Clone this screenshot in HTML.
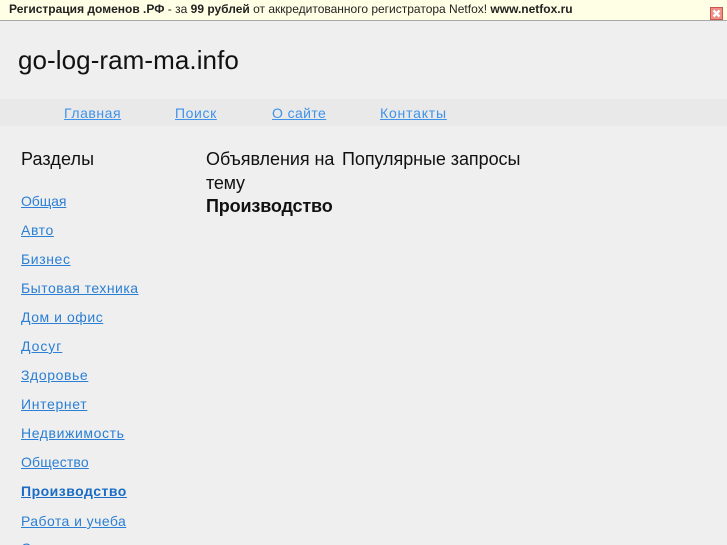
<!DOCTYPE html>
<html lang="ru"><head><meta charset="utf-8"><title>go-log-ram-ma.info</title>
<style>
html,body{margin:0;padding:0;background:#efefef}
#w{position:relative;width:727px;height:545px;overflow:hidden;background:#efefef;font-family:"Liberation Sans",sans-serif;color:#111}
.t{position:absolute;white-space:nowrap}
a{color:#2b7fd4;text-decoration:underline}
#bar{position:absolute;left:0;top:0;width:727px;height:20px;background:#ffffe6;border-bottom:1px solid #a8a8a8}
#nav{position:absolute;left:0;top:99px;width:727px;height:27px;background:#e9e9e9}
.s{left:21px;font-size:14px;line-height:16px}
.n{top:105px;font-size:14px;line-height:16px;color:#3f92ea}
.h{font-size:18px;line-height:24px;letter-spacing:-.06px}
</style></head><body><div id="w">
<div id="bar"></div>
<div class="t" style="left:9px;top:2px;font-size:12px;line-height:15px;color:#222"><b>Регистрация доменов .РФ</b> - за <b>99 рублей</b> от аккредитованного регистратора Netfox! <b>www.netfox.ru</b></div>
<svg style="position:absolute;left:710px;top:7px" width="13" height="13" viewBox="0 0 13 13"><rect x=".5" y=".5" width="12" height="12" fill="#ef8f86" stroke="#c9564f"/><path d="M3.5 3.5l6 6M9.5 3.5l-6 6" stroke="#fff" stroke-width="2.4"/></svg>
<div class="t" style="left:18px;top:44px;font-size:26px;line-height:32px;letter-spacing:.07px;color:#111">go-log-ram-ma.info</div>
<div id="nav"></div>
<a class="t n" style="left:64px;letter-spacing:.55px" href="#">Главная</a>
<a class="t n" style="left:175px;letter-spacing:.6px" href="#">Поиск</a>
<a class="t n" style="left:272px;letter-spacing:.4px" href="#">О сайте</a>
<a class="t n" style="left:380px;letter-spacing:.8px" href="#">Контакты</a>
<div class="t h" style="left:21px;top:147px;letter-spacing:.1px">Разделы</div>
<div class="t h" style="left:206px;top:147px">Объявления на</div>
<div class="t h" style="left:206px;top:171px;letter-spacing:-.2px">тему</div>
<div class="t h" style="left:206px;top:194px;letter-spacing:-.15px"><b>Производство</b></div>
<div class="t h" style="left:342px;top:147px">Популярные запросы</div>
<a class="t s" style="top:193px;letter-spacing:-.1px" href="#">Общая</a>
<a class="t s" style="top:222px;letter-spacing:.6px" href="#">Авто</a>
<a class="t s" style="top:251px;letter-spacing:.6px" href="#">Бизнес</a>
<a class="t s" style="top:280px;letter-spacing:.48px" href="#">Бытовая техника</a>
<a class="t s" style="top:309px;letter-spacing:.55px" href="#">Дом и офис</a>
<a class="t s" style="top:338px;letter-spacing:.95px" href="#">Досуг</a>
<a class="t s" style="top:367px;letter-spacing:.6px" href="#">Здоровье</a>
<a class="t s" style="top:396px;letter-spacing:.66px" href="#">Интернет</a>
<a class="t s" style="top:425px;letter-spacing:.6px" href="#">Недвижимость</a>
<a class="t s" style="top:454px;letter-spacing:.16px" href="#">Общество</a>
<a class="t s" style="top:483px;color:#1a6cc4;letter-spacing:.5px" href="#"><b>Производство</b></a>
<a class="t s" style="top:513px;letter-spacing:.43px" href="#">Работа и учеба</a>
<a class="t s" style="top:540px;letter-spacing:.4px" href="#">Семья</a>
</div></body></html>
